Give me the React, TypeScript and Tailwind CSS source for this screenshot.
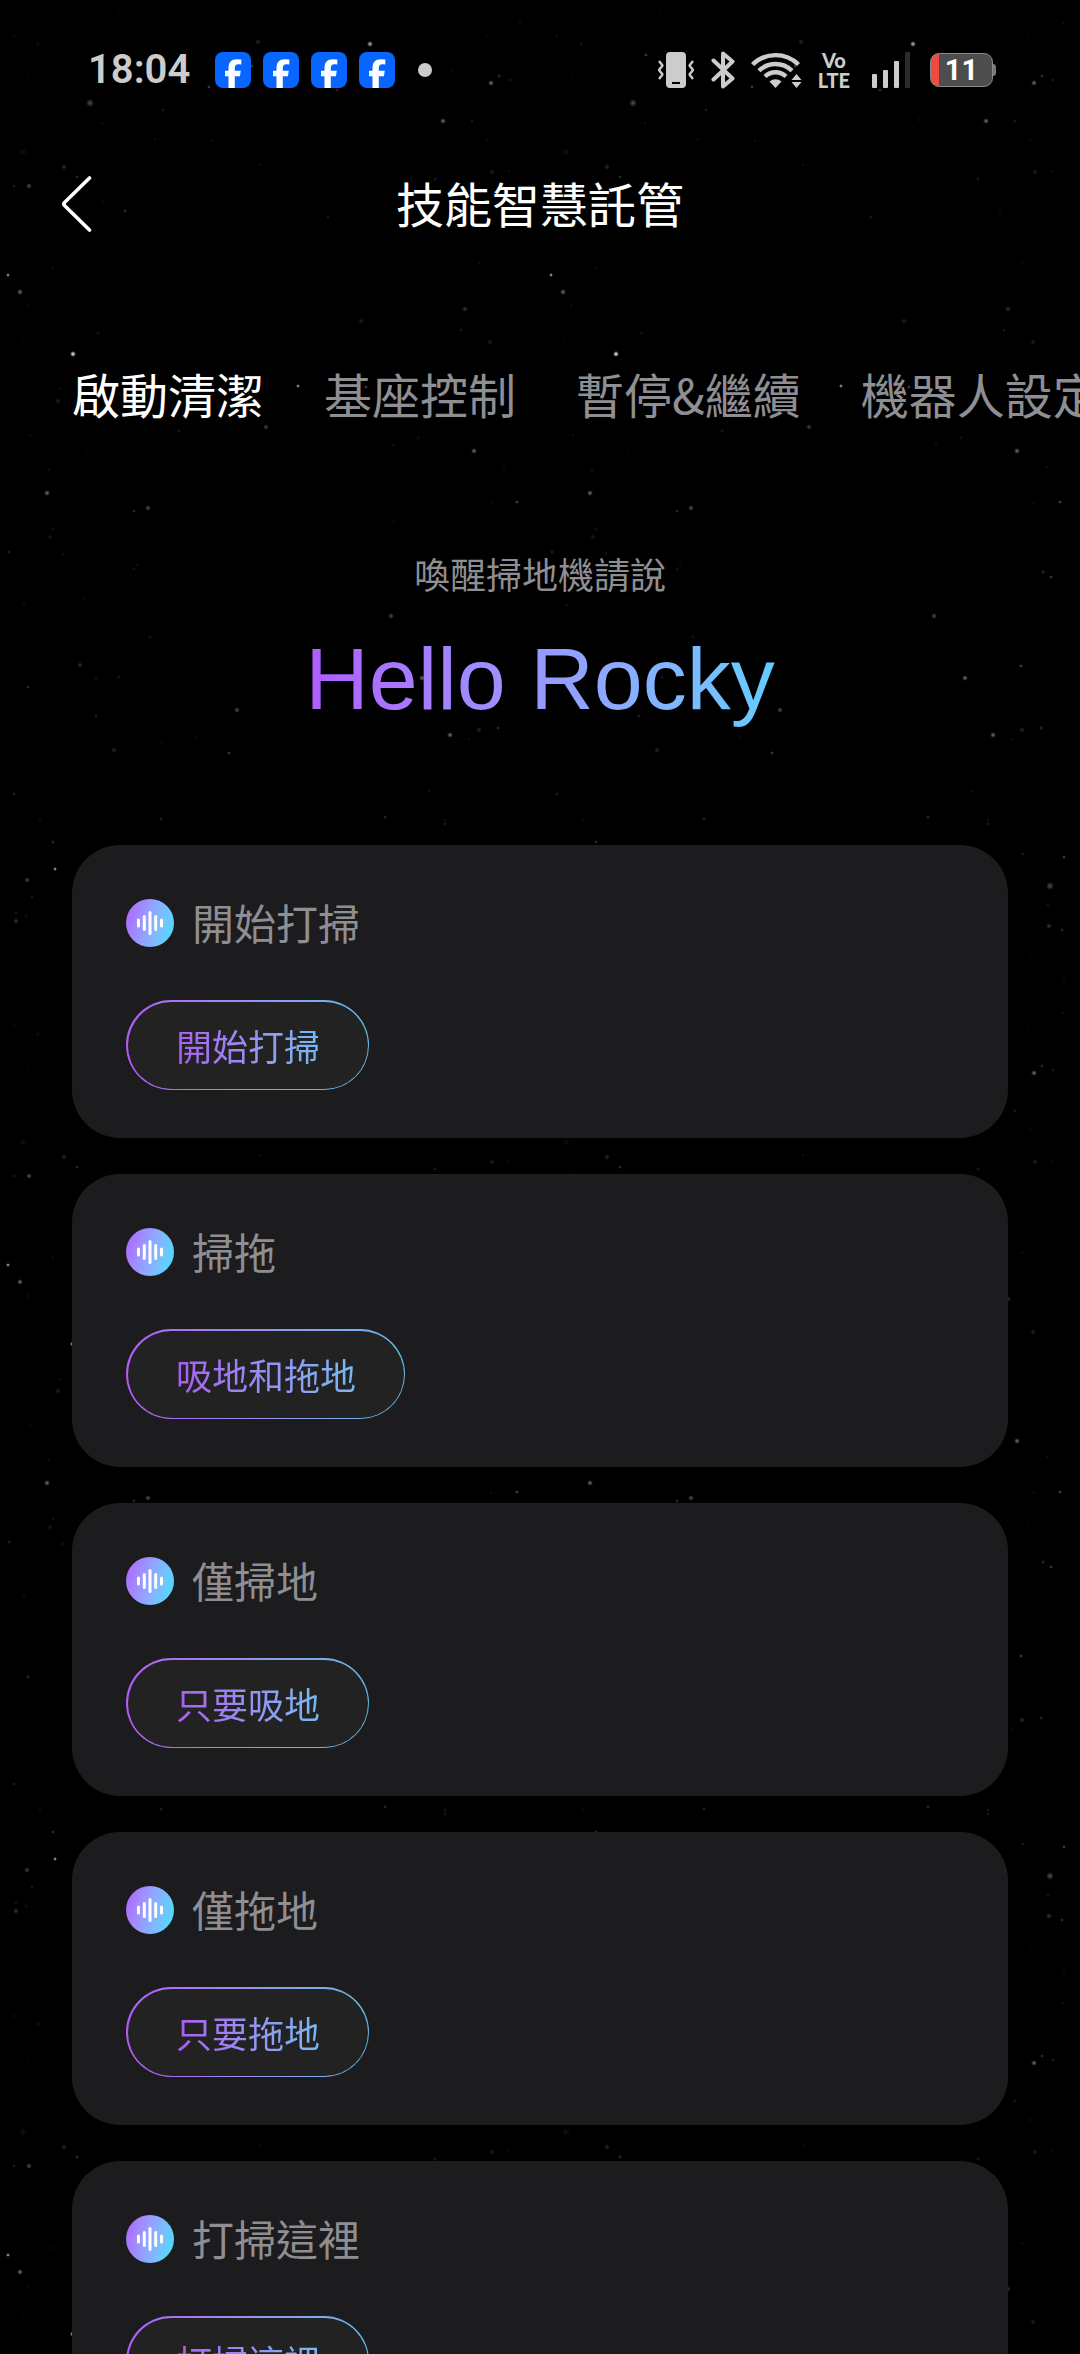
import React, { useState } from "react";

interface ISkill {
  title: string;
  command: string;
}

const tabs = ["啟動清潔", "基座控制", "暫停&繼續", "機器人設定"];

const skills: ISkill[] = [
  { title: "開始打掃", command: "開始打掃" },
  { title: "掃拖", command: "吸地和拖地" },
  { title: "僅掃地", command: "只要吸地" },
  { title: "僅拖地", command: "只要拖地" },
  { title: "打掃這裡", command: "打掃這裡" },
];

// x, y, radius, opacity inside one 543x990 tile
const stars = [
  [118, 13, 1, 0.15], [14, 36, 1, 0.2], [38, 44, 1, 0.25], [144, 36, 1, 0.1], [28, 78, 1, 0.15],
  [258, 42, 2, 0.35], [370, 44, 2, 0.8], [103, 55, 1, 0.5], [209, 87, 1, 0.5], [252, 66, 1, 0.5],
  [90, 103, 3, 0.5], [163, 110, 1, 0.3], [102, 123, 1, 0.2], [155, 139, 1, 0.2], [212, 141, 1, 0.2],
  [23, 152, 3, 0.2], [64, 167, 2, 0.35], [77, 177, 1, 0.4], [14, 186, 1, 0.3], [29, 186, 2, 0.5],
  [103, 202, 1, 0.2], [125, 211, 1, 0.4], [260, 165, 1, 0.2], [328, 217, 1, 0.3], [376, 120, 1, 0.2],
  [443, 121, 2, 0.6], [472, 121, 1, 0.3], [491, 83, 2, 0.6], [499, 76, 1, 0.4], [510, 80, 1, 0.3],
  [520, 23, 1, 0.2], [486, 36, 1, 0.15], [487, 140, 1, 0.2], [492, 172, 2, 0.3], [509, 171, 1, 0.2],
  [435, 179, 1, 0.3], [479, 263, 1, 0.2], [53, 268, 1, 0.2], [337, 90, 1, 0.4], [451, 71, 1, 0.2],
  [457, 213, 2, 0.15], [8, 275, 1, 0.8], [20, 292, 2, 0.6], [28, 306, 1, 0.2], [22, 338, 1, 0.15],
  [98, 333, 1, 0.25], [73, 354, 2, 1], [361, 321, 2, 0.3], [465, 309, 2, 0.4], [461, 330, 1, 0.3],
  [490, 342, 2, 0.3], [298, 386, 1, 0.8], [366, 387, 1, 0.5], [60, 389, 1, 0.2], [58, 401, 2, 0.3],
  [266, 427, 2, 0.45], [179, 431, 1, 0.3], [30, 435, 1, 0.2], [86, 453, 1, 0.15], [418, 438, 1, 0.25],
  [393, 445, 1, 0.25], [474, 451, 2, 0.6], [504, 467, 1, 0.2], [49, 470, 1, 0.25], [47, 493, 2, 0.6],
  [148, 508, 2, 0.5], [134, 511, 1, 0.4], [517, 502, 1, 0.5], [491, 503, 1, 0.2], [53, 529, 1, 0.25],
  [50, 537, 2, 0.25], [9, 552, 1, 0.35], [63, 554, 1, 0.25], [137, 565, 1, 0.2], [134, 569, 1, 0.25],
  [393, 521, 1, 0.15], [486, 536, 1, 0.15], [84, 599, 1, 0.15], [24, 605, 1, 0.25], [391, 616, 2, 0.5],
  [150, 637, 1, 0.25], [80, 665, 2, 0.35], [96, 678, 1, 0.25], [119, 677, 1, 0.3], [28, 687, 1, 0.4],
  [422, 678, 2, 0.6], [237, 710, 2, 0.5], [96, 716, 1, 0.35], [450, 735, 2, 0.6], [479, 730, 2, 0.35],
  [498, 728, 1, 0.4], [469, 739, 1, 0.2], [114, 750, 2, 0.35], [229, 753, 1, 0.5], [196, 737, 1, 0.2],
  [161, 743, 1, 0.15], [508, 577, 1, 0.5], [500, 572, 1, 0.4], [478, 666, 1, 0.5], [14, 794, 1, 0.35],
  [40, 820, 1, 0.2], [161, 819, 1, 0.35], [53, 842, 1, 0.4], [55, 869, 1, 0.8], [27, 880, 2, 0.45],
  [32, 897, 1, 0.3], [16, 921, 2, 0.4], [16, 913, 1, 0.25], [26, 916, 1, 0.25], [429, 791, 1, 0.25],
  [385, 817, 1, 0.4], [445, 820, 1, 0.25], [445, 824, 1, 0.3], [480, 854, 1, 0.3], [521, 857, 1, 0.5],
  [507, 886, 3, 0.5], [505, 905, 1, 0.25], [506, 926, 2, 0.4], [519, 930, 1, 0.4], [488, 957, 1, 0.15],
  [521, 981, 1, 0.2],
];

function StarField() {
  return (
    <svg className="pointer-events-none absolute inset-0 h-full w-full" aria-hidden="true">
      <defs>
        <radialGradient id="star">
          <stop offset="0" stopColor="#fff" />
          <stop offset="0.4" stopColor="#fff" stopOpacity="0.6" />
          <stop offset="1" stopColor="#fff" stopOpacity="0" />
        </radialGradient>
        <pattern id="sky" width="543" height="990" patternUnits="userSpaceOnUse">
          {/* squared opacity keeps the dim stars barely visible */}
          {stars.map(([x, y, r, o], i) => (
            <circle key={i} cx={x} cy={y} r={r + 1} fill="url(#star)" opacity={o * (o + 0.15)} />
          ))}
        </pattern>
      </defs>
      <rect width="100%" height="100%" fill="url(#sky)" />
    </svg>
  );
}

function FacebookIcon() {
  return (
    <svg className="h-9 w-9" viewBox="0 0 36 36" aria-hidden="true">
      <rect width="36" height="36" rx="8" fill="#0866ff" />
      <path
        d="M13.5 36V24.2H10v-5.4h3.5v-2.6c0-6 2.9-9 8.4-9 1.6 0 3.6.2 4.6.5l-.3 4.8c-.8-.2-1.8-.3-2.7-.3-2.7 0-3.7 1.2-3.7 3.9v2.7h6l-.9 5.4h-5.1V36z"
        fill="#fff"
      />
    </svg>
  );
}

function VibrateIcon() {
  return (
    <svg className="h-9 w-[38px]" viewBox="0 0 38 36" fill="none" aria-hidden="true">
      <path d="M13 0h12a4 4 0 0 1 4 4v28a4 4 0 0 1-4 4H13a4 4 0 0 1-4-4V4a4 4 0 0 1 4-4zM15 30v2h8v-2z" fill="#ccc" fillRule="evenodd" />
      <path d="M2 9l3.5 4.5L2 18l3.5 4.5L2 27M36 9l-3.5 4.5L36 18l-3.5 4.5L36 27" stroke="#ccc" strokeWidth="2.4" strokeLinejoin="round" />
    </svg>
  );
}

function BluetoothIcon() {
  return (
    <svg className="h-[38px] w-6" viewBox="0 0 24 38" fill="none" aria-hidden="true">
      <path d="M2.5 9.5l19 18L12 35.5V2.5l9.5 8-19 18" stroke="#ccc" strokeWidth="4" strokeLinecap="round" strokeLinejoin="round" />
    </svg>
  );
}

function WifiIcon() {
  return (
    <svg className="h-9 w-[51px]" viewBox="0 0 51 36" fill="none" aria-hidden="true">
      <path d="M1.5 12.5a33 33 0 0 1 46 0M8 18.8a23.5 23.5 0 0 1 33 0M14 24.5a15 15 0 0 1 21 0" stroke="#ccc" strokeWidth="4.4" />
      <path d="M18.5 29.5a9 9 0 0 1 12 0L24.5 36z" fill="#ccc" />
      <path d="M45.5 22l5 6h-10zM40.5 30h10l-5 6z" fill="#ccc" />
    </svg>
  );
}

function SignalIcon() {
  return (
    <svg className="h-9 w-[38px]" viewBox="0 0 38 36" aria-hidden="true">
      <rect x="0" y="22" width="5" height="14" rx="1" fill="#ccc" />
      <rect x="11" y="18" width="5" height="18" rx="1" fill="#ccc" />
      <rect x="22" y="9" width="5" height="27" rx="1" fill="#ccc" />
      <rect x="33" y="0" width="5" height="36" rx="1" fill="#2b2b2b" />
    </svg>
  );
}

function Battery() {
  return (
    <div className="flex items-center">
      <div className="flex h-[34px] w-[63px] items-center justify-center rounded-[9px] border border-[#8a8a8a] bg-linear-to-r from-[#ee4b40] from-13% to-[#4d4d4d] to-13% text-[29px] leading-none font-bold text-white">
        11
      </div>
      <div className="h-3 w-[3px] rounded-r-sm bg-[#777]" />
    </div>
  );
}

function StatusBar() {
  return (
    <div className="flex h-[140px] shrink-0 items-center justify-between pr-[84px] pl-[88px] font-[Roboto,sans-serif]">
      <div className="flex items-center">
        <span className="text-[40px] leading-none font-semibold text-[#ccc]">18:04</span>
        <div className="ml-[25px] flex gap-3">
          <FacebookIcon />
          <FacebookIcon />
          <FacebookIcon />
          <FacebookIcon />
        </div>
        <div className="ml-[23px] h-3.5 w-3.5 rounded-full bg-[#ccc]" />
      </div>
      <div className="flex items-center">
        <div className="flex items-center gap-4">
          <VibrateIcon />
          <BluetoothIcon />
          <WifiIcon />
          <div className="text-center font-[Lato,sans-serif] text-[20px] leading-[20px] font-black text-[#ccc]">
            <div>Vo</div>
            <div>LTE</div>
          </div>
        </div>
        <div className="ml-[22px] flex items-center gap-5">
          <SignalIcon />
          <Battery />
        </div>
      </div>
    </div>
  );
}

function VoiceIcon() {
  return (
    <div className="h-12 w-12 shrink-0 rounded-full bg-linear-105 from-[#b05cff] to-[#5ad2ff] to-85%">
      <svg viewBox="0 0 48 48" stroke="#fff" strokeWidth="3" strokeLinecap="round" aria-hidden="true">
        <path d="M12.5 21v6M18.3 17.5v13M24 13.5v21M29.7 17.5v13M35.5 21v6" />
      </svg>
    </div>
  );
}

function SkillCard({ title, command }: ISkill) {
  return (
    <section className="rounded-[48px] bg-[#1c1c1e] px-[54px] pt-[54px] pb-12">
      <div className="flex h-12 items-center gap-[18px]">
        <VoiceIcon />
        <h2 className="pb-0.5 text-[42px] leading-[48px] text-[#8e8e93]">{title}</h2>
      </div>
      {/* gradient shows through the padding as the outline */}
      <button
        type="button"
        className="mt-[53px] block rounded-full bg-linear-to-r from-[#b05cf5] to-[#62bdea] pt-0.5 pr-px pb-px pl-0.5"
      >
        <span className="block rounded-full bg-[#222] px-12">
          <span className="block bg-linear-to-r from-[#a95cf2] to-[#74baf0] bg-clip-text text-[36px] leading-[87px] text-transparent">
            {command}
          </span>
        </span>
      </button>
    </section>
  );
}

function App() {
  const [active, setActive] = useState(0);

  return (
    <div className="relative h-screen overflow-hidden bg-black font-['Noto_Sans_CJK_TC',sans-serif] text-white">
      <StarField />
      <div className="relative flex h-full flex-col">
        <StatusBar />

        <header className="grid h-32 shrink-0 grid-cols-[1fr_auto_1fr] items-center px-[60px]">
          <button type="button" aria-label="返回" className="justify-self-start">
            <svg className="h-[56px] w-8" viewBox="0 0 32 56" fill="none" aria-hidden="true">
              <path d="M29.5 2L4.5 26.5Q3 28 4.5 29.5L29.5 54" stroke="#fff" strokeWidth="3.6" strokeLinecap="round" />
            </svg>
          </button>
          <h1 className="pb-1 text-[48px] leading-[72px]">技能智慧託管</h1>
        </header>

        <div role="tablist" className="mt-[89px] flex shrink-0 gap-[60px] overflow-x-auto px-[72px] [scrollbar-width:none]">
          {tabs.map((tab, i) => (
            <button
              key={tab}
              type="button"
              role="tab"
              aria-selected={active === i}
              onClick={() => setActive(i)}
              className={`shrink-0 text-[48px] leading-[72px] whitespace-nowrap ${active === i ? "text-white" : "text-[#8e8e93]"}`}
            >
              {tab}
            </button>
          ))}
        </div>

        <main className="flex-1 overflow-y-auto px-[72px] pb-9 [scrollbar-width:none]">
          <div className="flex flex-col items-center pt-[117px] pb-[113px]">
            <p className="text-[36px] leading-[54px] text-[#8e8e93]">喚醒掃地機請說</p>
            <p className="mt-[26px] bg-linear-to-r from-[#b05cff] to-[#62ccff] bg-clip-text font-['Liberation_Sans',sans-serif] text-[88px] leading-[106px] text-transparent">
              Hello Rocky
            </p>
          </div>
          <div className="flex flex-col gap-9">
            {skills.map((skill) => (
              <SkillCard key={skill.title} {...skill} />
            ))}
          </div>
        </main>
      </div>
    </div>
  );
}

export default App;
